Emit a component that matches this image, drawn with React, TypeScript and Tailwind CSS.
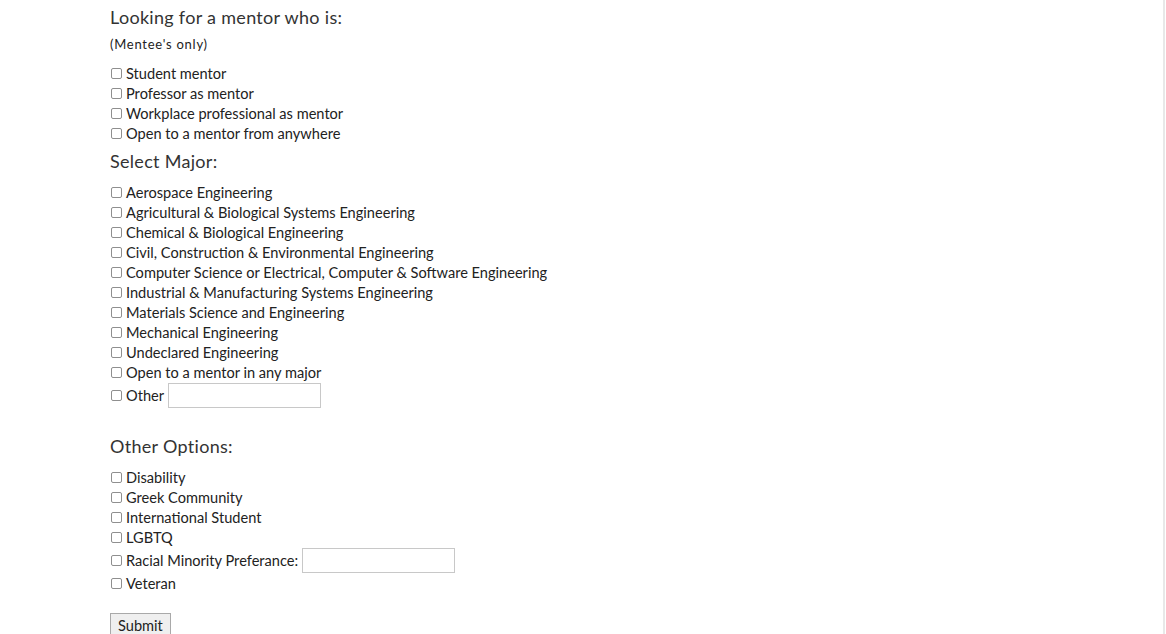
import React from "react";

const Box = () => (
  <span className="inline-block w-[11px] h-[11px] border border-[#8f8f8f] rounded-[2px] bg-white shrink-0" />
);

const Row = ({ label }: { label: string }) => (
  <div className="flex items-center h-5">
    <span className="ml-[1px] mr-[4px] flex items-center"><Box /></span>
    <span className="leading-5 pt-[2px]">{label}</span>
  </div>
);

const InputRow = ({ label }: { label: string }) => (
  <div className="flex items-center h-[26px]">
    <span className="ml-[1px] mr-[4px] flex items-center"><Box /></span>
    <span className="leading-5 pt-[2px]">{label}</span>
    <span className="ml-[4px] inline-block w-[153px] h-[25px] border border-[#c8c8c8] bg-white" />
  </div>
);

const Heading = ({ children, className }: { children: React.ReactNode; className?: string }) => (
  <div className={"text-[18px] leading-[24px] text-[#333] tracking-[0.3px] " + (className ?? "")}>{children}</div>
);

export default function App() {
  const mentors = [
    "Student mentor",
    "Professor as mentor",
    "Workplace professional as mentor",
    "Open to a mentor from anywhere",
  ];
  const majors = [
    "Aerospace Engineering",
    "Agricultural & Biological Systems Engineering",
    "Chemical & Biological Engineering",
    "Civil, Construction & Environmental Engineering",
    "Computer Science or Electrical, Computer & Software Engineering",
    "Industrial & Manufacturing Systems Engineering",
    "Materials Science and Engineering",
    "Mechanical Engineering",
    "Undeclared Engineering",
    "Open to a mentor in any major",
  ];
  const others = ["Disability", "Greek Community", "International Student", "LGBTQ"];
  return (
    <div className="flex w-full h-[634px] bg-white overflow-hidden" style={{ fontFamily: "Lato, 'Noto Sans', sans-serif" }}>
      <div className="flex-1 pl-[110px] text-[14.6px] text-[#222]">
        <Heading className="mt-[5px]">Looking for a mentor who is:</Heading>
        <div className="mt-[6px] h-[18px] leading-[18px] text-[13px] tracking-[0.75px]">(Mentee's only)</div>
        <div className="mt-[10px]">
          {mentors.map((m) => (
            <Row key={m} label={m} />
          ))}
        </div>
        <Heading className="mt-[6px]">Select Major:</Heading>
        <div className="mt-[9px]">
          {majors.map((m) => (
            <Row key={m} label={m} />
          ))}
          <InputRow label="Other" />
        </div>
        <Heading className="mt-[26px]">Other Options:</Heading>
        <div className="mt-[9px]">
          {others.map((m) => (
            <Row key={m} label={m} />
          ))}
          <InputRow label="Racial Minority Preferance:" />
          <Row label="Veteran" />
        </div>
        <div className="mt-[20px]">
          <button className="h-[24px] px-[7px] pt-[2px] border border-[#a9a9a9] bg-[#efefef] text-[14.6px] leading-[20px] text-[#222]">
            Submit
          </button>
        </div>
      </div>
      <div className="w-[2px] bg-[#e8e8e8]" />
      <div className="w-[1px]" />
    </div>
  );
}
